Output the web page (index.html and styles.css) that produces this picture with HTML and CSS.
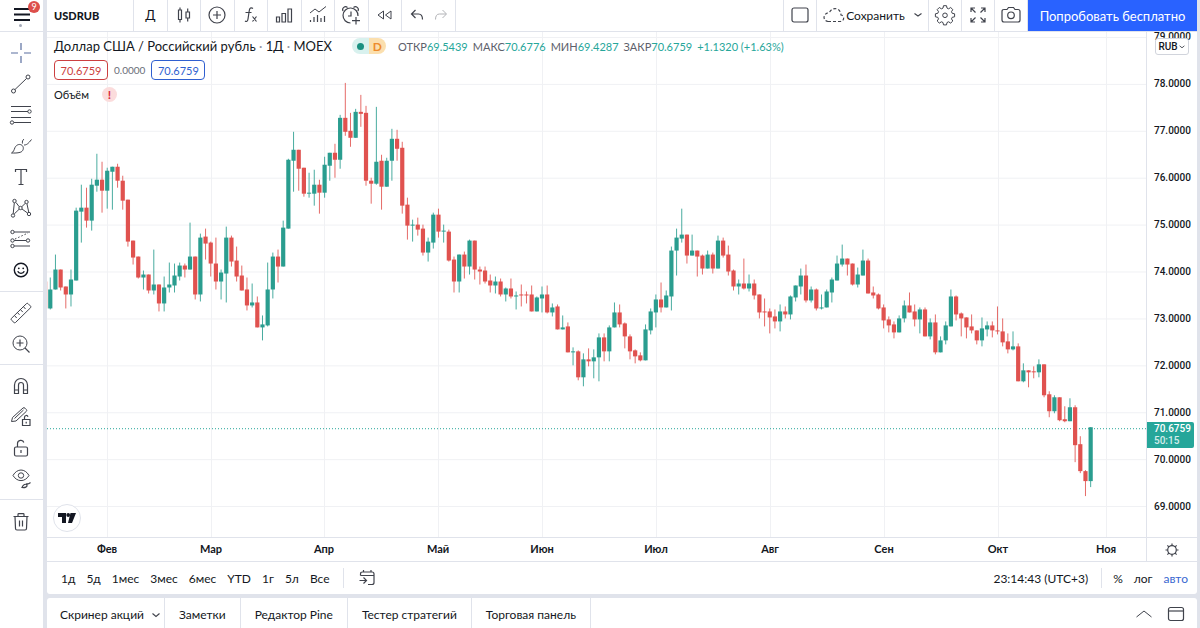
FILE: index.html
```html
<!DOCTYPE html>
<html lang="ru">
<head>
<meta charset="utf-8">
<meta name="viewport" content="width=device-width, initial-scale=1">
<title>USDRUB</title>
<link rel="stylesheet" href="styles.css">
</head>
<body>
<div class="app">
  <aside class="side">
    <button class="menu" aria-label="Меню">
      <svg class="ico" viewBox="0 0 24 24"><path class="thick" d="M4 6h16M4 11.500h16M4 17h16"/></svg>
      <span class="badge">9</span><span class="dot"></span>
    </button>
    <nav class="tools" aria-label="Инструменты рисования">
      <div class="group first">
        <button aria-label="Перекрестие"><svg class="ico cross" viewBox="0 0 24 24"><path d="M12 2v7M12 15v7M2 12h7M15 12h7"/></svg></button>
        <button aria-label="Линия"><svg class="ico" viewBox="0 0 24 24"><circle cx="4.500" cy="19" r="2"/><circle cx="19" cy="5" r="2"/><path d="M6 17.500L17.500 6.500"/></svg></button>
        <button aria-label="Фибоначчи"><svg class="ico" viewBox="0 0 24 24"><path d="M2 3.500h20M2 8.500h17M2 14.500h20M5 19.500h17"/><circle cx="20.500" cy="8.500" r="1.700"/><circle cx="3" cy="19.500" r="1.700"/></svg></button>
        <button aria-label="Кисть"><svg class="ico" viewBox="0 0 24 24"><path d="M2.500 19c2-1 2.500-3 3.500-5.500 1.500-3 5-4 7.200-2 2.200 2.200 1 6-2 6.800-3 .9-5.500.7-8.700.7zM13.500 9.500c-.5-2 .3-3.500 1.500-4.500M15 11c2.500 0 4-1 7.500-5.500"/></svg></button>
        <button aria-label="Текст"><svg class="ico" viewBox="0 0 24 24"><path class="mid" d="M6.500 7V4.500h11V7M12 4.500v15M9.500 19.500h5"/></svg></button>
        <button aria-label="Паттерны"><svg class="ico" viewBox="0 0 24 24"><circle cx="5.500" cy="5" r="1.700"/><circle cx="17.500" cy="6" r="1.700"/><circle cx="4" cy="19.500" r="1.700"/><circle cx="20" cy="18" r="1.700"/><circle cx="11.500" cy="12" r="1.700"/><path d="M5.300 7L4.200 17.700M18 8l1.700 8M7 6.500l3.200 4.200M16.300 7.300l-3.600 3.500M5.200 18l5-4.800M13 13l5.500 4"/></svg></button>
        <button aria-label="Прогноз"><svg class="ico" viewBox="0 0 24 24"><circle cx="3.500" cy="5" r="1.700"/><circle cx="3.500" cy="13.500" r="1.700"/><circle cx="19" cy="13.500" r="1.700"/><circle cx="3.500" cy="19" r="1.700"/><path d="M5.200 5H21M5.200 13.500h12M5.200 19H21"/><path stroke-dasharray="1.500 2" d="M6 12l13-6"/></svg></button>
        <button aria-label="Смайлы"><svg class="ico" viewBox="0 0 24 24"><circle class="face" cx="12" cy="12" r="6.700"/><circle class="solid" cx="9.800" cy="10.300" r=".9"/><circle class="solid" cx="14.200" cy="10.300" r=".9"/><path class="face" d="M8.700 13.300c1.200 2.700 5.400 2.700 6.600 0"/></svg></button>
      </div>
      <div class="group">
        <button aria-label="Линейка"><svg class="ico" viewBox="0 0 24 24"><path d="M2.300 17.500L17.500 2.600q.8-.7 1.500 0l2.600 2.600q.7.700 0 1.500L6.500 21.500q-.7.700-1.500 0l-2.700-2.600q-.7-.7 0-1.400zM5.500 14.500L7.700 17M8.500 11.600l2 2.200M11.500 8.700l2.300 2.400M14.500 5.700l2 2.300"/></svg></button>
        <button aria-label="Увеличить"><svg class="ico" viewBox="0 0 24 24"><circle cx="11" cy="11" r="7"/><path class="mid" d="M11 7.500v7M7.500 11h7M16 16l4.500 4.500"/></svg></button>
      </div>
      <div class="group">
        <button aria-label="Магнит"><svg class="ico" viewBox="0 0 24 24"><path class="mid" d="M5.500 19.500V11a6.500 6.500 0 0 1 13 0v8.500h-4V11a2.500 2.500 0 0 0-5 0v8.500zM5.500 16h4M14.500 16h4"/></svg></button>
        <button aria-label="Режим рисования"><svg class="ico" viewBox="0 0 24 24"><path d="M2.500 16.500l1-4L14 3q1-.8 2 .2l1.300 1.300q.9 1 0 1.900L7 16zM5.500 13.500l9-8.500"/><path class="mid" d="M13.500 14.500h7.500v6h-7.500zM15.500 14.500v-2.200a1.800 1.800 0 0 1 3.500-.6M17.200 16.700v1.700"/></svg></button>
        <button aria-label="Блокировка"><svg class="ico" viewBox="0 0 24 24"><rect class="mid" x="5.500" y="11" width="13" height="9" rx="1.500"/><path class="mid" d="M8.500 11V7.500c0-3.500 5.500-4.300 6.300-1M12 14v3"/></svg></button>
        <button aria-label="Скрыть"><svg class="ico" viewBox="0 0 24 24"><path d="M4 8.500c4-7.300 12-7.300 16 0-4 6.800-12 6.800-16 0z"/><circle cx="12" cy="8.500" r="2.700"/><path class="mid" d="M13 20.500c1.200-3 3.500-4 5-2.600.6 2-2 3-5 2.600zM17.500 16.300c.5 1 2 1 4-.8"/></svg></button>
      </div>
      <div class="group last">
        <button aria-label="Удалить"><svg class="ico" viewBox="0 0 24 24"><path class="mid" d="M4.500 6.500h15M9 6.500v-2q0-.8.800-.8h4.400q.8 0 .8.800v2M6 6.500l.5 12q0 1.500 1.500 1.500h8q1.500 0 1.500-1.500l.5-12M10.500 10.500v6M13.500 10.500v6"/></svg></button>
      </div>
    </nav>
  </aside>

  <main class="main">
    <header class="top">
      <button class="symbol">USDRUB</button>
      <div class="cells">
        <button class="interval">Д</button>
        <button aria-label="Свечи"><svg class="ico" viewBox="0 0 24 24"><path class="mid" d="M6.500 7h3v9.500h-3zM8 4.500V7M8 16.500v3M14 9h3.500v6H14zM15.700 5.500V9M15.700 15v3.500"/></svg></button>
        <button aria-label="Сравнить"><svg class="ico" viewBox="0 0 24 24"><circle class="mid" cx="12" cy="12" r="8"/><path class="mid" d="M12 8v8M8 12h8"/></svg></button>
        <button aria-label="Индикаторы"><svg class="ico" viewBox="0 0 24 24"><path class="mid" d="M14 5.500c-2-1.500-3.500-.4-3.800 2.500L9 16c-.3 2.500-1.600 3-3 2M6.500 9.500h6M13.500 13.500l4 5M17.500 13.500l-4 5"/></svg></button>
        <button aria-label="Финансы"><svg class="ico" viewBox="0 0 24 24"><path class="mid" d="M4.500 14h3v5h-3zM10 10.500h3.500V19H10zM16 6h3.500v13H16z"/></svg></button>
        <button aria-label="Шаблоны"><svg class="ico" viewBox="0 0 24 24"><path d="M4 10l5-4 4 3 7-5.500"/><path class="mid" d="M4.500 17v2M8 14v5M11.500 12v7M15 15v4M18.500 13v6"/></svg></button>
        <button aria-label="Оповещение"><svg class="ico" viewBox="0 0 24 24"><path class="mid" d="M11.500 20A7.500 7.500 0 1 1 19 13M4 8c-1.500-3 2-5.500 4.500-3.500M14.500 4.500C17 2.500 20.500 5 19 8M12 8.500V13H9M17 14v7.500M13 17.700h8"/></svg></button>
        <button aria-label="Симулятор"><svg class="ico" viewBox="0 0 24 24"><path d="M10.500 8v8L5 12zM18 8v8l-5.500-4z"/></svg></button>
      </div>
      <div class="history">
        <button aria-label="Отменить"><svg class="ico" viewBox="0 0 24 24"><path class="mid" d="M10.500 7L6.500 11l4 4M7 11h6.500q4 0 4 5.500"/></svg></button>
        <button aria-label="Повторить" disabled><svg class="ico" viewBox="0 0 24 24"><path d="M13.500 7l4 4-4 4M17 11h-6.500q-4 0-4 5.500"/></svg></button>
      </div>
      <div class="right">
        <button class="cell" aria-label="Макет"><svg class="ico" viewBox="0 0 24 24"><rect class="mid" x="4" y="5" width="16" height="14" rx="2"/></svg></button>
        <button class="save"><svg class="ico" viewBox="0 0 24 24"><path stroke-dasharray="3 2" class="mid" d="M6 18.500h12c5-.5 4.500-6 1-6.500C18.500 4 9.500 4 7.500 9.500 1 10 0 17.500 6 18.500z"/></svg><span>Сохранить</span><svg class="chev" viewBox="0 0 10 6"><path d="M1.500 1.500L5 4l3.500-2.500"/></svg></button>
        <button class="cell" aria-label="Настройки"><svg class="ico" viewBox="0 1 24 24"><path d="M10.500 3.700h3l.5 2.400 1.600.7 2.100-1.300 2.100 2.100-1.300 2.100.7 1.600 2.400.5v3l-2.400.5-.7 1.600 1.300 2.100-2.100 2.100-2.100-1.300-1.600.7-.5 2.400h-3l-.5-2.400-1.600-.7-2.100 1.300-2.100-2.100 1.300-2.100-.7-1.600-2.400-.5v-3l2.400-.5.700-1.600-1.300-2.100 2.100-2.100 2.100 1.300 1.600-.7z"/><circle cx="12" cy="13.300" r="2.300"/></svg></button>
        <button class="cell" aria-label="Полный экран"><svg class="ico" viewBox="0 0 24 24"><path class="mid" d="M5 9V5h4M5 5l4.500 4.500M15 5h4v4M19 5l-4.500 4.500M5 15v4h4M5 19l4.500-4.500M15 19h4v-4M19 19l-4.500-4.500"/></svg></button>
        <button class="cell" aria-label="Снимок"><svg class="ico" viewBox="0 0 24 24"><path class="mid" d="M5 6.500h3l1.500-2h5l1.500 2h3q2 0 2 2V17q0 2-2 2H5q-2 0-2-2V8.500q0-2 2-2z"/><circle class="mid" cx="12" cy="12.300" r="3.300"/></svg></button>
        <a class="cta" href="#">Попробовать бесплатно</a>
      </div>
    </header>

    <section class="panel">
      <div class="chart">
        <div class="plot">
          <svg class="canvas" id="canvas" viewBox="47 32 1099 506" preserveAspectRatio="none" role="img" aria-label="График USDRUB"></svg>
          <div class="legend">
            <div class="line">
              <h1>Доллар США / Российский рубль <i>·</i> 1Д <i>·</i> MOEX</h1>
              <span class="status"><span class="open"></span><span class="delay">D</span></span>
              <dl class="ohlc">
                <div><dt>ОТКР</dt><dd>69.5439</dd></div>
                <div><dt>МАКС</dt><dd>70.6776</dd></div>
                <div><dt>МИН</dt><dd>69.4287</dd></div>
                <div><dt>ЗАКР</dt><dd>70.6759</dd></div>
                <div><dd>+1.1320 (+1.63%)</dd></div>
              </dl>
            </div>
            <div class="quotes">
              <button class="sell">70.6759</button><span>0.0000</span><button class="buy">70.6759</button>
            </div>
            <div class="volume">Объём <span class="warn">!</span></div>
          </div>
          <a class="logo" href="#" aria-label="TradingView"><svg viewBox="0 0 20 12"><path d="M1 1h8v10H5V5H1zM13.500 1H19l-4 10h-4z"/><circle cx="11.200" cy="3" r="1.900"/></svg></a>
        </div>
        <div class="prices">
          <ol class="scale"><li>79.0000</li><li>78.0000</li><li>77.0000</li><li>76.0000</li><li>75.0000</li><li>74.0000</li><li>73.0000</li><li>72.0000</li><li>71.0000</li><li>70.0000</li><li>69.0000</li></ol>
          <button class="currency">RUB<svg class="chev" viewBox="0 0 10 6"><path d="M2 1.500L5 4l3-2.500"/></svg></button>
          <div class="last-price"><b>70.6759</b><span>50:15</span></div>
        </div>
        <div class="times" id="times"></div>
        <button class="axis-settings" aria-label="Настройки шкалы"><svg class="ico" viewBox="0 0 24 24"><circle class="mid" cx="12" cy="12" r="4.300"/><path class="mid" d="M12 5.500v2M12 16.500v2M5.500 12h2M16.500 12h2M7.400 7.400l1.400 1.400M15.200 15.200l1.400 1.400M7.400 16.600l1.400-1.400M15.200 8.800l1.400-1.400"/></svg></button>
      </div>
      <div class="ranges">
        <button>1д</button><button>5д</button><button>1мес</button><button>3мес</button><button>6мес</button><button>YTD</button><button>1г</button><button>5л</button><button>Все</button>
        <span class="rule"></span>
        <button aria-label="Перейти к дате"><svg class="ico" viewBox="0 0 24 24"><path class="mid" d="M5.500 9.500V8q0-2 2-2h9.500q2 0 2 2v8.500q0 2-2 2h-4M5.500 9.500H19M8.500 4v2M16 4v2M4.500 14.500h6.500M8.500 11.500l3 3-3 3"/></svg></button>
        <button class="clock">23:14:43 (UTC+3)</button>
        <span class="rule"></span>
        <button>%</button><button>лог</button><button class="on">авто</button>
      </div>
    </section>

    <footer class="tabs">
      <button class="screener">Скринер акций<svg class="chev" viewBox="0 0 10 6"><path d="M1.500 1.500L5 4.500l3.500-3"/></svg></button>
      <button>Заметки</button><button>Редактор Pine</button><button>Тестер стратегий</button><button>Торговая панель</button>
      <div class="window">
        <button aria-label="Развернуть"><svg class="ico" viewBox="0 0 24 24"><path d="M4.500 15L12 9l7.500 6"/></svg></button>
        <button aria-label="На весь экран"><svg class="ico" viewBox="0 0 24 24"><rect class="mid" x="4.500" y="5.500" width="15" height="13" rx="2"/><path class="mid" d="M4.500 9h15"/></svg></button>
      </div>
    </footer>
  </main>
</div>
<script src="chart.js"></script>
</body>
</html>
```

FILE: styles.css
```css
* { box-sizing: border-box; }
body { margin: 0; font-family: Lato, "Open Sans", sans-serif; font-size: 12px; color: #131722; background: #e0e3eb; }
button { margin: 0; padding: 0; border: 0; background: none; font: inherit; color: inherit; display: flex; align-items: center; justify-content: center; white-space: nowrap; }
a { text-decoration: none; }
h1, dl, dd, dt, ol { margin: 0; padding: 0; }

.ico { width: 24px; height: 24px; flex: none; fill: none; stroke: #40434c; stroke-width: 1; }
.ico .mid { stroke-width: 1.2; }
.ico .thick { stroke: #131722; stroke-width: 1.8; }
.ico .face { stroke: #131722; stroke-width: 1.4; }
.ico .solid { fill: #131722; stroke: none; }
.ico.cross { stroke: #5a6fa0; stroke-width: 1.2; }
.chev { width: 10px; height: 6px; flex: none; fill: none; stroke: #40434c; stroke-width: 1.1; }

.app { display: grid; grid-template-columns: 43px 1fr; column-gap: 4px; height: 100vh; padding-right: 3px; }
.side { background: #fff; display: flex; flex-direction: column; }
.menu { position: relative; width: 100%; height: 32px; border-bottom: 1px solid #e0e3eb; padding-bottom: 1px; flex: none; }
.badge { position: absolute; left: 28px; top: 1px; width: 12px; height: 12px; border-radius: 50%; background: #dd4f4b; color: #fff; font-size: 9px; line-height: 12px; }
.dot { position: absolute; left: 19px; top: 24px; width: 3px; height: 3px; border-radius: 50%; background: #a3a9b8; }
.group { padding: 5px 0; border-bottom: 1px solid #e0e3eb; }
.group.first { padding-bottom: 6px; }
.group.last { border-bottom: 0; padding-top: 6px; }
.group button { width: 41px; height: 31px; }

.main { display: flex; flex-direction: column; min-width: 0; }
.top { display: flex; height: 32px; flex: none; background: #fff; border-bottom: 1px solid #e0e3eb; }
.top button { height: 31px; padding-bottom: 1px; }
.top .symbol { width: 87px; font-size: 11px; font-weight: 900; justify-content: flex-start; padding-left: 7px; border-right: 1px solid #e0e3eb; }
.cells { display: grid; grid-template-columns: repeat(8, 1fr); width: 268px; }
.cells button { border-right: 1px solid #e0e3eb; }
.interval { font-size: 13px; }
.history { display: flex; align-items: center; justify-content: center; width: 54px; border-right: 1px solid #e0e3eb; }
.history button:disabled { opacity: .4; }
.right { display: flex; margin-left: auto; border-left: 1px solid #e0e3eb; }
.cell { width: 33px; border-right: 1px solid #e0e3eb; }
.save { width: 112px; border-right: 1px solid #e0e3eb; }
.save .chev { margin-left: 8px; }
.cta { width: 169px; height: 31px; display: flex; align-items: center; justify-content: center; background: #2962ff; color: #fff; font-size: 13px; white-space: nowrap; }

.panel { flex: 1; min-height: 0; display: flex; flex-direction: column; background: #fff; border-radius: 0 0 3px 3px; }
.chart { flex: 1; min-height: 0; display: grid; grid-template: 1fr 24px / 1fr 51px; }
.plot { position: relative; min-width: 0; min-height: 0; overflow: hidden; }
.canvas { position: absolute; inset: 0; width: 100%; height: 100%; }
.grid { stroke: #f0f1f4; stroke-width: 1; }
.now { stroke: #26a69a; stroke-width: 1; stroke-dasharray: 1 2; }
.up { fill: #2a9d8f; }
.down { fill: #e0524f; }
.wick { opacity: .85; }

.legend { position: absolute; left: 7px; top: 4px; display: flex; flex-direction: column; }
.line { display: flex; align-items: center; height: 20px; }
h1 { font-size: 13px; font-weight: 400; white-space: nowrap; }
h1 i { font-style: normal; color: #9598a1; }
.status { display: flex; margin: 0 12px 0 20px; border-radius: 8px; overflow: hidden; height: 16px; flex: none; }
.open, .delay { width: 17px; display: flex; align-items: center; justify-content: center; }
.open { background: #d8f1ee; }
.open::before { content: ""; width: 7px; height: 7px; border-radius: 50%; background: #1a9080; }
.delay { background: #fbdfae; color: #ee8b2c; font-weight: 700; }
.ohlc { display: flex; gap: 5px; font-size: 11px; color: #5d606b; white-space: nowrap; }
.ohlc div { display: flex; }
.ohlc dd { color: #26a69a; }
.quotes { display: flex; align-items: center; gap: 6px; height: 20px; margin-top: 4px; font-size: 10px; color: #6a6d78; }
.quotes button { width: 54px; height: 20px; border: 1px solid; border-radius: 4px; font-size: 11px; background: #fff; }
.quotes .sell { color: #cc3f40; }
.quotes .buy { color: #2f5fd0; }
.volume { display: flex; align-items: center; gap: 13px; height: 20px; margin-top: 4px; font-size: 11px; }
.warn { width: 15px; height: 15px; border-radius: 50%; background: #fbdcdc; color: #d92b3a; font-weight: 700; font-size: 12px; line-height: 15px; text-align: center; }
.logo { position: absolute; left: 6px; bottom: 5px; width: 28px; height: 28px; border: 1px solid #e0e3eb; border-radius: 50%; background: #fff; display: flex; align-items: center; justify-content: center; }
.logo svg { width: 20px; height: 12px; fill: #131722; }

.prices { position: relative; overflow: hidden; border-left: 1px solid #e0e3eb; font-family: Roboto, sans-serif; font-size: 10px; font-weight: 500; }
.scale { list-style: none; margin-top: -19px; }
.scale li { height: 47px; line-height: 48px; padding-left: 7px; }
.currency { position: absolute; left: 8px; top: 6px; width: 34px; height: 17px; border: 1px solid #d1d4dc; border-radius: 3px; background: #fff; }
.currency .chev { width: 8px; }
.last-price { position: absolute; left: 0; top: 390px; width: 47px; height: 26px; padding: 1px 0 0 7px; border-radius: 0 2px 2px 0; background: #26a69a; color: #fff; display: flex; flex-direction: column; line-height: 12px; }
.last-price b { font-weight: 500; }
.last-price span { opacity: .8; }
.times { position: relative; overflow: hidden; border-top: 1px solid #e0e3eb; font-size: 11px; font-weight: 700; line-height: 22px; }
.times span { position: absolute; transform: translateX(-50%); }
.axis-settings { border-top: 1px solid #e0e3eb; border-left: 1px solid #e0e3eb; }

.ranges { display: flex; align-items: center; gap: 11px; height: 33px; padding: 0 9px 0 14px; border-top: 1px solid #e0e3eb; flex: none; }
.ranges .rule { width: 1px; height: 20px; margin-left: 2px; background: #e0e3eb; }
.clock { margin-left: auto; }
.ranges .on { color: #3a67d0; }

.tabs { display: flex; height: 30px; margin-top: 4px; flex: none; background: #fff; border-radius: 3px 3px 0 0; font-size: 12px; }
.tabs > button { padding: 3px 14px 0; border-right: 1px solid #e0e3eb; }
.tabs > .screener { padding-left: 13px; padding-right: 3px; }
.tabs .chev { margin-left: 7px; }
.window { display: flex; align-items: center; gap: 8px; margin-left: auto; padding: 2px 9px 0 0; }
```

FILE: chart.js
```js
const NS = "http://www.w3.org/2000/svg";
const canvas = document.getElementById("canvas");
const FIRST_X = 45.1, STEP = 5.176, BODY = 4.2;

// direction, high, body top, body bottom, low
const candles = `
r 282 282 309 309;g 278 290 309 310;g 255 270 290 290;r 270 270 288 291;r 287 287 295 309;g 270 280 295 307;g 208 211 281 281;g 185 208 212 243;r 188 208 221 228;g 179 185 221 231;
g 154 180 186 192;r 162 180 191 213;g 168 171 191 209;g 167 167 172 210;r 164 167 181 188;r 176 181 201 210;r 200 200 242 247;r 241 241 258 265;r 257 257 278 279;g 271 275 278 290;
r 275 275 291 294;g 250 285 291 295;r 285 285 304 312;g 277 288 304 312;g 263 285 288 293;g 264 276 286 293;g 263 266 277 281;r 264 266 270 278;g 223 257 270 270;r 257 257 295 300;
g 234 238 295 302;r 229 237 244 260;r 242 243 264 277;r 238 264 282 290;g 270 273 282 300;g 227 238 274 303;r 236 238 262 267;r 247 261 277 282;r 266 276 291 291;r 278 290 306 311;
g 284 303 306 308;r 297 303 328 328;g 316 325 328 341;g 263 290 326 327;g 253 257 290 299;r 250 257 267 283;g 221 228 267 267;g 159 160 229 229;g 132 150 161 192;r 150 150 169 191;
r 168 168 194 197;g 173 193 194 198;g 170 185 194 206;r 180 185 193 214;g 157 165 193 198;g 153 153 166 181;r 144 153 160 178;g 115 118 160 169;r 83 118 132 136;r 113 131 138 147;
g 109 112 138 138;r 95 112 114 127;r 106 113 181 186;r 178 181 184 204;g 107 162 184 185;r 155 161 187 210;g 158 161 187 187;g 129 139 161 181;r 130 139 149 161;r 142 148 206 214;
r 198 205 226 240;g 220 225 226 242;r 218 225 230 236;r 225 229 253 256;g 238 242 253 262;g 213 215 243 249;r 209 215 232 238;g 225 231 232 243;r 230 232 261 262;r 257 260 282 293;
g 255 255 282 293;r 252 255 267 279;g 240 241 267 275;r 241 241 270 280;r 267 270 272 285;r 267 271 282 284;r 275 281 286 293;g 277 282 286 294;r 279 282 295 297;g 288 289 295 302;
r 279 289 297 299;g 292 296 297 310;r 285 295 296 307;r 292 295 296 304;r 286 295 312 312;g 297 298 312 312;g 287 295 299 313;r 286 295 313 314;g 304 308 313 317;r 305 307 330 330;
g 316 328 330 330;r 323 327 353 353;g 348 352 353 366;r 351 352 378 381;g 354 360 378 387;r 349 360 362 367;g 350 358 362 379;g 334 338 358 382;r 334 338 352 362;g 326 328 352 362;
g 303 313 328 328;r 305 313 325 328;r 323 324 337 349;r 335 337 352 360;r 350 351 357 364;r 353 356 361 362;g 325 330 361 361;g 309 312 331 335;g 295 300 313 328;r 283 300 308 313;
g 291 296 308 308;g 247 251 297 311;g 229 238 251 276;g 209 235 239 243;r 235 235 256 264;g 235 251 256 256;r 251 251 257 277;r 255 256 269 275;g 251 255 269 269;r 253 255 269 274;
g 236 241 269 269;r 238 241 256 258;r 246 255 272 276;r 270 271 287 291;g 280 284 287 295;r 259 284 289 290;g 275 284 289 292;r 280 284 296 300;r 295 295 313 319;r 299 312 313 327;
r 309 312 318 334;r 310 317 322 329;g 305 312 322 332;r 307 312 315 319;g 296 297 315 320;g 286 286 298 302;g 269 276 287 295;r 265 276 301 303;g 287 290 301 303;r 289 290 309 311;
g 295 308 309 310;g 290 292 308 308;g 278 280 293 303;g 256 264 281 281;g 245 259 265 267;r 259 259 265 276;r 264 264 285 286;g 268 275 285 288;g 250 261 276 276;r 259 261 294 294;
r 287 293 296 299;r 294 295 309 310;r 305 308 321 329;r 317 320 326 333;r 322 325 333 339;g 316 319 333 333;g 301 306 319 323;r 293 306 313 313;r 305 312 320 327;g 308 310 320 334;
r 308 310 337 337;g 319 323 337 340;r 315 323 353 355;g 337 341 353 353;g 322 326 341 345;g 290 297 327 327;r 296 297 315 321;r 313 314 319 337;r 318 318 328 339;r 315 327 331 334;
r 331 331 341 345;g 318 329 341 347;g 322 326 330 337;r 322 326 331 338;r 307 331 332 335;r 319 332 343 347;r 334 342 350 354;g 332 347 350 351;r 344 347 382 382;g 364 371 382 383;
r 371 371 373 388;r 367 372 373 379;g 360 365 373 378;r 365 365 396 398;r 392 395 412 418;g 396 398 412 414;r 398 398 421 422;r 407 420 422 423;g 399 408 422 422;r 406 408 446 463;
r 437 445 472 474;r 471 472 482 497;g 428 428 482 488`.trim().split(";").map(row => row.trim().split(" "));

const months = [["Фев", 107], ["Мар", 211], ["Апр", 324], ["Май", 438], ["Июн", 542], ["Июл", 656], ["Авг", 770], ["Сен", 884], ["Окт", 998], ["Ноя", 1106]];

function add(name, attrs) {
  const node = document.createElementNS(NS, name);
  for (const key in attrs) node.setAttribute(key, attrs[key]);
  canvas.appendChild(node);
}

for (let i = 0; i < 11; i++) {
  const y = Math.round(36.7 + i * 47.05) + .5;
  add("line", { class: "grid", x1: 47, x2: 1146, y1: y, y2: y });
}
const times = document.getElementById("times");
for (const [name, x] of months) {
  add("line", { class: "grid", x1: x + .5, x2: x + .5, y1: 32, y2: 538 });
  const label = document.createElement("span");
  label.textContent = name;
  label.style.left = (x - 47) / 10.99 + "%";
  times.appendChild(label);
}
add("line", { class: "now", x1: 47, x2: 1146, y1: 429.5, y2: 429.5 });
candles.forEach(([dir, high, top, bottom, low], i) => {
  const x = FIRST_X + i * STEP;
  const tone = dir === "g" ? "up" : "down";
  add("rect", { class: tone + " wick", x: x - .5, y: high, width: 1, height: low - high });
  add("rect", { class: tone, x: x - BODY / 2, y: top, width: BODY, height: bottom - top });
});
```
